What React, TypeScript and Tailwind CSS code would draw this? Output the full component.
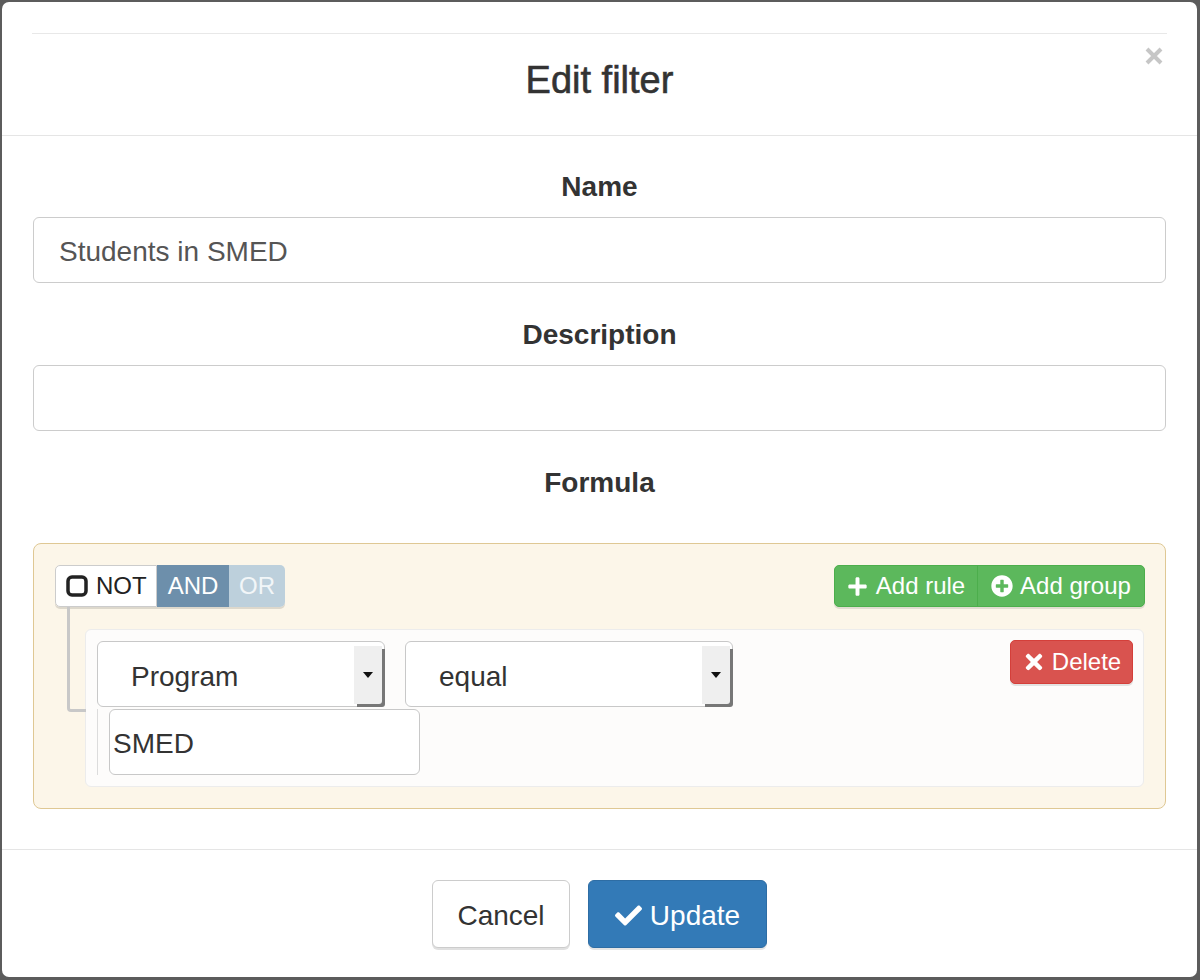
import { FaCheck, FaPlus, FaPlusCircle, FaTimes } from "react-icons/fa";

const font = { fontFamily: '"Liberation Sans", Arial, sans-serif' };

function Select({ label, width }: { label: string; width: string }) {
    return (
        <div className={`relative h-[66px] ${width} rounded-[6px] border border-[#c8c8c8] bg-white flex items-center pl-[33px] pt-[5px] text-[28px] text-[#333]`}>
            <span>{label}</span>
            <div className="absolute right-[2px] top-[4px] bottom-[2px] w-[28px] bg-[#efefef] shadow-[3px_3px_0_#777] rounded-br-[3px] flex items-center justify-center">
                <div className="w-0 h-0 border-l-[5px] border-r-[5px] border-t-[6px] border-l-transparent border-r-transparent border-t-[#111]" />
            </div>
        </div>
    );
}

export default function App() {
    return (
        <div className="w-[1200px] h-[980px] bg-[#5c5c5c] p-[2px] pr-[3px] pb-[3px]" style={font}>
            <div className="relative h-full bg-white rounded-[7px] flex flex-col">
                {/* header */}
                <div className="border-b border-[#e5e5e5] h-[134px]">
                    <div className="mx-[30px] mt-[31px] border-t border-[#e8e8e8] pt-[26px] text-center text-[38px] text-[#333] leading-[40px] [-webkit-text-stroke:0.6px_#333]">
                        Edit filter
                    </div>
                </div>
                <button className="absolute right-[34px] top-[45px] text-[#c6c6c6]">
                    <svg width="18" height="18" viewBox="0 0 18 18">
                        <path d="M2 2 L16 16 M16 2 L2 16" stroke="currentColor" strokeWidth="4" />
                    </svg>
                </button>

                {/* body */}
                <div className="flex-1 px-[31px] pt-[36px]">
                    <label className="block text-center text-[28px] font-bold text-[#333] leading-[30px] mb-[15px]">Name</label>
                    <div className="h-[66px] rounded-[6px] border border-[#cccccc] flex items-center px-[25px] pt-[3px] text-[28px] text-[#555]">
                        Students in SMED
                    </div>
                    <label className="block text-center text-[28px] font-bold text-[#333] leading-[30px] mt-[37px] mb-[15px]">Description</label>
                    <div className="h-[66px] rounded-[6px] border border-[#cccccc]" />
                    <label className="block text-center text-[28px] font-bold text-[#333] leading-[30px] mt-[37px] mb-[45px]">Formula</label>

                    {/* query builder */}
                    <div className="h-[266px] rounded-[8px] border border-[#dfc894] bg-[#fcf6e9] p-[21px]">
                        <div className="flex justify-between">
                            <div className="flex h-[42px] text-[24px] rounded-[5px] shadow-[0_2px_0_rgba(0,0,0,0.12)]">
                                <div className="flex items-center gap-[8px] w-[102px] pl-[10px] bg-white border border-[#ccc] rounded-l-[5px] text-[#222]">
                                    <svg width="22" height="22" viewBox="0 0 22 22">
                                        <rect x="2" y="2" width="18" height="18" rx="4" fill="none" stroke="#222" strokeWidth="3.5" />
                                    </svg>
                                    <span>NOT</span>
                                </div>
                                <div className="flex items-center justify-center w-[72px] bg-[#6d8fab] text-white">AND</div>
                                <div className="flex items-center justify-center w-[56px] bg-[#bdd0dc] text-[#f2f6f8] rounded-r-[5px]">OR</div>
                            </div>
                            <div className="flex h-[42px] text-[24px] text-white rounded-[5px] bg-[#5cb85c] border border-[#4cae4c] shadow-[0_2px_0_rgba(0,0,0,0.1)] -mr-[1px]">
                                <div className="flex items-center justify-center gap-[8px] w-[143px] border-r border-[#4cae4c]">
                                    <FaPlus className="w-[21px] h-[21px]" />
                                    <span>Add rule</span>
                                </div>
                                <div className="flex items-center justify-center gap-[7px] w-[166px]">
                                    <FaPlusCircle className="w-[22px] h-[22px]" />
                                    <span>Add group</span>
                                </div>
                            </div>
                        </div>

                        <div className="relative ml-[30px] mt-[22px] h-[158px] rounded-[6px] border border-[#ececec] bg-[#fdfcfb] pl-[11px] pt-[11px] pr-[10px]">
                            <div className="absolute -left-[19px] -top-[23px] w-[19px] h-[105px] border-l-[3px] border-b-[3px] border-[#c8c8c8] rounded-bl-[4px]" />
                            <div className="flex justify-between">
                                <div className="flex gap-[20px]">
                                    <Select label="Program" width="w-[288px]" />
                                    <Select label="equal" width="w-[328px]" />
                                </div>
                                <div className="flex items-center justify-center gap-[6px] h-[44px] w-[123px] -mt-[1px] rounded-[5px] bg-[#d9534f] border border-[#d43f3a] text-white text-[24px] shadow-[0_2px_0_rgba(0,0,0,0.1)]">
                                    <FaTimes className="w-[24px] h-[24px]" />
                                    <span>Delete</span>
                                </div>
                            </div>
                            <div className="mt-[2px] border-l border-[#dcdcdc] pl-[11px] w-fit">
                                <div className="h-[66px] w-[311px] rounded-[6px] border border-[#c8c8c8] bg-white flex items-center pl-[3px] pt-[3px] text-[28px] text-[#333]">
                                    SMED
                                </div>
                            </div>
                        </div>
                    </div>
                </div>

                {/* footer */}
                <div className="h-[128px] border-t border-[#e5e5e5] flex justify-center gap-[18px] pt-[30px]">
                    <button className="h-[68px] w-[138px] rounded-[6px] border border-[#ccc] bg-white pt-[3px] text-[28px] text-[#333] shadow-[0_2px_0_rgba(0,0,0,0.12)]">
                        Cancel
                    </button>
                    <button className="h-[68px] w-[179px] rounded-[6px] border border-[#2e6da4] bg-[#337ab7] pt-[3px] text-[28px] text-white flex items-center justify-center gap-[8px] shadow-[0_2px_0_rgba(0,0,0,0.1)]">
                        <FaCheck className="w-[27px] h-[27px]" />
                        <span>Update</span>
                    </button>
                </div>
            </div>
        </div>
    );
}
